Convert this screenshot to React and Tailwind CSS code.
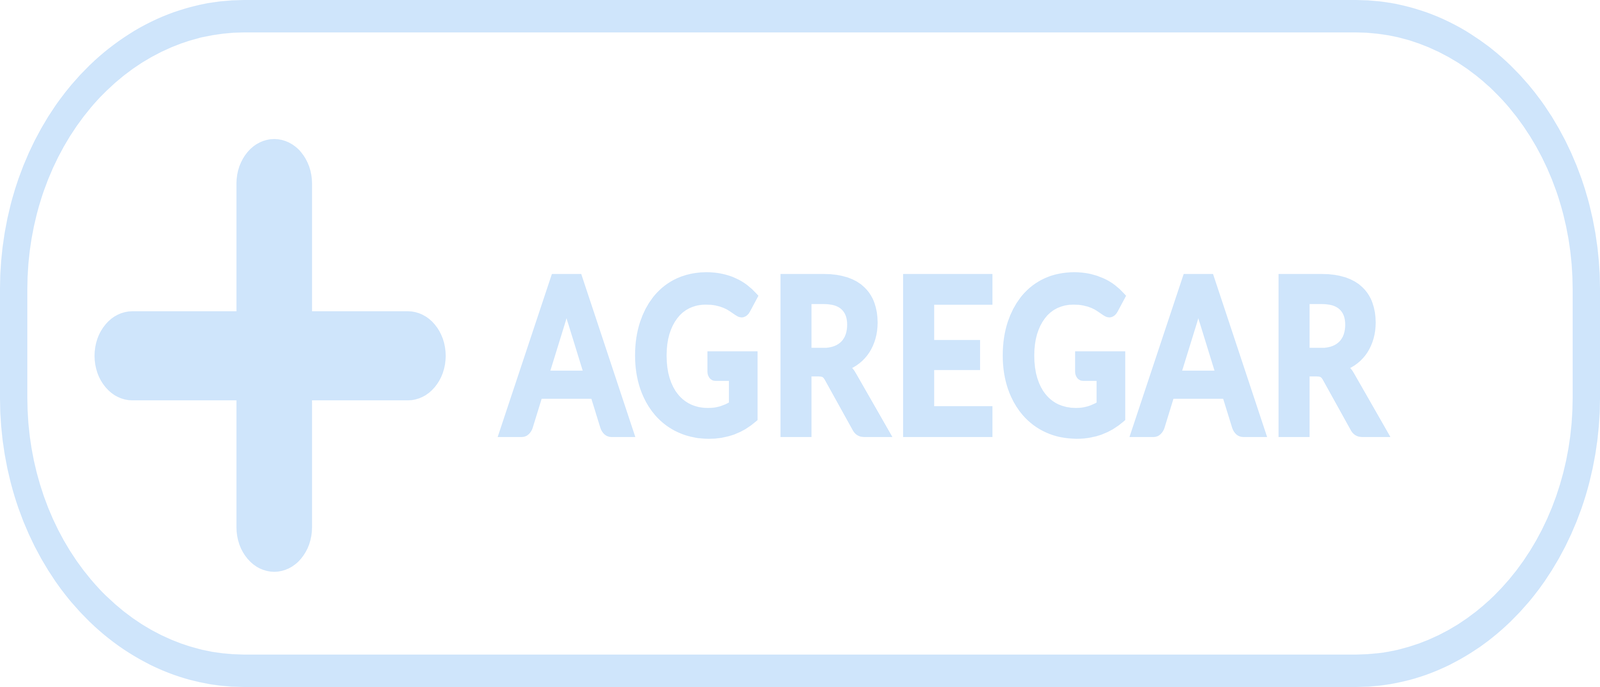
import React from "react";

// The window is 4096 wide, the reference 4851: horizontal sizes are scaled by 0.8444
const PlusIcon = () => (
  <svg
    viewBox="0 0 1064 1108"
    preserveAspectRatio="none"
    className="w-[899px] h-[1108px] shrink-0 mt-[273px]"
    fill="#cfe5fb"
  >
    <rect x="0" y="441" width="1064" height="228" rx="114" />
    <rect x="430" y="0" width="229" height="1108" rx="114" />
  </svg>
);

export default function App() {
  return (
    <div className="w-screen h-[1759px] overflow-hidden bg-white">
      <div className="w-full h-full box-border border-x-[70px] border-y-[83px] border-[#cfe5fb] rounded-[625px/740px] flex items-start pl-[172px]">
        <PlusIcon />
        <span
          className="ml-[148px] mt-[538px] text-[550px] leading-none font-bold tracking-[18px] text-[#cfe5fb] whitespace-nowrap origin-left scale-x-[0.8444] [-webkit-text-stroke:20px_#cfe5fb] [paint-order:stroke]"
          style={{ fontFamily: "Lato, 'Liberation Sans', sans-serif" }}
        >
          AGREGAR
        </span>
      </div>
    </div>
  );
}
